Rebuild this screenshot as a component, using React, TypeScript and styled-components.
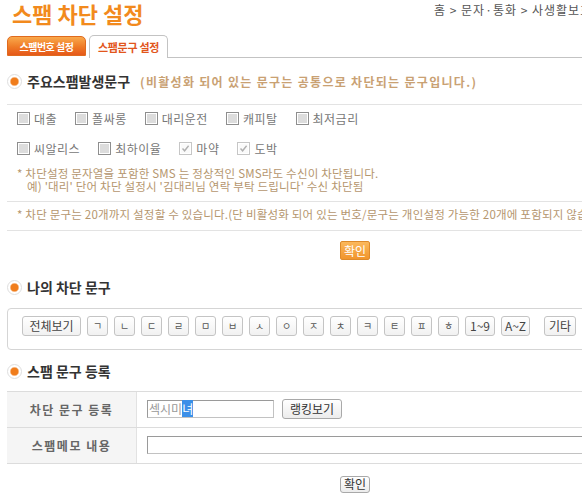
import React from 'react';
import styled, { createGlobalStyle } from 'styled-components';

const GlobalStyle = createGlobalStyle`
  html, body {
    margin: 0;
    padding: 0;
    background: #fff;
    overflow: hidden;
  }
  body {
    font-family: "Noto Sans CJK KR", "Noto Sans", sans-serif;
    font-size: 12px;
    color: #555;
  }
`;

const FONT = `"Noto Sans CJK KR", "Noto Sans", sans-serif`;

const Page = styled.div`
  width: 696px;
  margin-left: 7px;
`;

const Header = styled.header`
  display: grid;
  grid-template-columns: 422px auto;
  height: 30px;
  padding-left: 5px;
`;

const Title = styled.h1`
  margin: 0;
  font-size: 22px;
  line-height: 27px;
  font-weight: 700;
  color: #f28a1d;
`;

const Breadcrumb = styled.div`
  font-size: 12px;
  line-height: 20px;
  color: #555;
  letter-spacing: 1px;
  white-space: nowrap;
`;

const TabBar = styled.div`
  display: flex;
  align-items: flex-end;
  height: 23px;
  margin-top: 5px;
`;

const Tab = styled.div<{ $active?: boolean }>`
  box-sizing: border-box;
  width: 79px;
  display: flex;
  align-items: center;
  justify-content: center;
  border-radius: 5px 5px 0 0;
  font-weight: 700;
  white-space: nowrap;
  ${(p) =>
    p.$active
      ? `
    height: 23px;
    margin-left: 3px;
    background: #fff;
    border: 1px solid #c3c3c3;
    border-bottom: none;
    color: #e2561c;
    font-size: 11px;
    letter-spacing: -0.3px;
  `
      : `
    height: 20px;
    margin-bottom: 2px;
    background: linear-gradient(#f9a94c, #ef7a26 55%, #e5581a);
    border: 1px solid #e06a1e;
    color: #fff;
    font-size: 10px;
    letter-spacing: -0.5px;
  `}
`;

const TabFiller = styled.div`
  flex: 1;
  border-bottom: 1px solid #c3c3c3;
`;

const SectionHead = styled.div<{ $top: number }>`
  display: flex;
  align-items: center;
  gap: 5px;
  height: 17px;
  margin-top: ${(p) => p.$top}px;
`;

const Bullet = styled.span`
  width: 15px;
  height: 15px;
  border-radius: 50%;
  box-sizing: border-box;
  border: 1px solid #dedede;
  background: radial-gradient(circle, #f07d1c 0 3.5px, #f7b37a 4px, #fff 5px);
  flex-shrink: 0;
`;

const HeadText = styled.h2`
  margin: 0;
  font-size: 14px;
  font-weight: 700;
  color: #333;
  line-height: 17px;
  white-space: nowrap;
`;

const HeadNote = styled.span`
  margin-left: 5px;
  font-size: 12px;
  font-weight: 700;
  color: #c9a173;
  letter-spacing: 1.3px;
  white-space: nowrap;
`;

const HeadBlock = styled.div`
  padding-bottom: 14px;
  border-bottom: 1px solid #e3e3e3;
`;

const CheckList = styled.div`
  display: flex;
  flex-direction: column;
  gap: 14px;
  padding: 5px 0 0 10px;
`;

const CheckRow = styled.div`
  display: flex;
  align-items: center;
  height: 16px;
`;

const CheckItem = styled.label`
  display: inline-flex;
  align-items: center;
  gap: 4px;
  margin-right: 18px;
  color: #777;
  font-size: 12px;
  letter-spacing: 0.5px;
  white-space: nowrap;
`;

const Box = styled.span<{ $checked?: boolean }>`
  box-sizing: border-box;
  width: 13px;
  height: 13px;
  display: inline-flex;
  align-items: center;
  justify-content: center;
  border: 1px solid ${(p) => (p.$checked ? '#c6c6c6' : '#8e8e8e')};
  background: ${(p) => (p.$checked ? '#fafafa' : '#dcdcdc')};
  box-shadow: inset 0 0 0 1px #fff;
`;

const Notes = styled.div<{ $top: number; $pad: number }>`
  margin-top: ${(p) => p.$top}px;
  padding: 0 0 ${(p) => p.$pad}px 10px;
  border-bottom: 1px solid #e3e3e3;
  color: #b5966e;
  font-size: 11.5px;
  line-height: 12.5px;
  white-space: nowrap;
  overflow: hidden;
`;

const NoteLine = styled.div<{ $indent?: boolean }>`
  padding-left: ${(p) => (p.$indent ? 10 : 0)}px;
  letter-spacing: 0.2px;
`;

const Center = styled.div<{ $top: number }>`
  display: flex;
  justify-content: center;
  margin-top: ${(p) => p.$top}px;
`;

const OrangeButton = styled.button`
  width: 30px;
  height: 19px;
  padding: 0;
  border: 1px solid #dd8a2a;
  border-radius: 2px;
  background: linear-gradient(#fbb85c, #f1952c);
  color: #fff;
  font-family: ${FONT};
  font-size: 12px;
  line-height: 17px;
`;

const GreyButton = styled.button<{ $w: number; $h: number }>`
  width: ${(p) => p.$w}px;
  height: ${(p) => p.$h}px;
  padding: 0;
  flex-shrink: 0;
  border: 1px solid #a9a9a9;
  border-radius: 3px;
  background: linear-gradient(#fff, #ececec);
  color: #333;
  font-family: ${FONT};
  font-size: 12px;
  line-height: 1;
`;

const KeyBox = styled.div`
  display: flex;
  gap: 6px;
  height: 20px;
  margin-top: 12px;
  padding: 7px 14px 13px;
  border: 1px solid #d5d5d5;
  border-radius: 4px;
`;

const KeyButton = styled.button<{ $w: number; $small?: boolean }>`
  width: ${(p) => p.$w}px;
  height: 20px;
  padding: 0;
  flex-shrink: 0;
  border: 1px solid #c4c4c4;
  border-radius: 3px;
  background: linear-gradient(#fff, #f1f1f1);
  color: ${(p) => (p.$small ? '#555' : '#444')};
  font-family: ${FONT};
  font-size: ${(p) => (p.$small ? 10 : 12)}px;
  line-height: 1;
`;

const Table = styled.div`
  margin-top: 11px;
  border-top: 1px solid #dcdcdc;
`;

const Row = styled.div`
  display: grid;
  grid-template-columns: 130px 1fr;
  height: 35px;
  border-bottom: 1px solid #dcdcdc;
`;

const Label = styled.div`
  display: flex;
  align-items: center;
  justify-content: center;
  background: #f5f5f5;
  border-right: 1px solid #e2e2e2;
  color: #666;
  font-weight: 700;
  font-size: 12px;
  letter-spacing: 1.5px;
`;

const Cell = styled.div`
  display: flex;
  align-items: center;
  gap: 8px;
  padding-left: 10px;
`;

const Field = styled.div<{ $wide?: boolean }>`
  box-sizing: border-box;
  height: 18px;
  ${(p) => (p.$wide ? 'flex: 1; margin-right: 10px;' : 'width: 127px;')}
  border: 1px solid #c2c2c2;
  border-top-color: #9a9a9a;
  border-left-color: #9a9a9a;
  padding-left: 1px;
  color: #999;
  font-size: 12px;
  line-height: 16px;
  white-space: nowrap;
`;

const Selected = styled.span`
  background: #3b8fe8;
  color: #fff;
`;

const Check = () => (
  <svg width="9" height="9" viewBox="0 0 9 9">
    <path d="M1.5 4.5 L3.6 6.8 L7.6 1.8" fill="none" stroke="#b0b0b0" strokeWidth="1.4" />
  </svg>
);

const row1 = ['대출', '폴싸롱', '대리운전', '캐피탈', '최저금리'];
const row2: [string, boolean][] = [
  ['씨알리스', false],
  ['최하이율', false],
  ['마약', true],
  ['도박', true],
];
const jamo = ['ㄱ', 'ㄴ', 'ㄷ', 'ㄹ', 'ㅁ', 'ㅂ', 'ㅅ', 'ㅇ', 'ㅈ', 'ㅊ', 'ㅋ', 'ㅌ', 'ㅍ', 'ㅎ'];

export default function App() {
  return (
    <Page>
      <GlobalStyle />
      <Header>
        <Title>스팸 차단 설정</Title>
        <Breadcrumb>홈 &gt; 문자·통화 &gt; 사생활보호</Breadcrumb>
      </Header>

      <TabBar>
        <Tab>스팸번호 설정</Tab>
        <Tab $active>스팸문구 설정</Tab>
        <TabFiller />
      </TabBar>

      <HeadBlock>
        <SectionHead $top={15}>
          <Bullet />
          <HeadText>주요스팸발생문구</HeadText>
          <HeadNote>(비활성화 되어 있는 문구는 공통으로 차단되는 문구입니다.)</HeadNote>
        </SectionHead>
      </HeadBlock>

      <CheckList>
        <CheckRow>
          {row1.map((t) => (
            <CheckItem key={t}>
              <Box />
              {t}
            </CheckItem>
          ))}
        </CheckRow>
        <CheckRow>
          {row2.map(([t, c]) => (
            <CheckItem key={t}>
              <Box $checked={c}>{c && <Check />}</Box>
              {t}
            </CheckItem>
          ))}
        </CheckRow>
      </CheckList>

      <Notes $top={11} $pad={9}>
        <NoteLine>* 차단설정 문자열을 포함한 SMS 는 정상적인 SMS라도 수신이 차단됩니다.</NoteLine>
        <NoteLine $indent>예) '대리' 단어 차단 설정시 '김대리님 연락 부탁 드립니다' 수신 차단됨</NoteLine>
      </Notes>
      <Notes $top={6} $pad={9}>
        <NoteLine>
          * 차단 문구는 20개까지 설정할 수 있습니다.(단 비활성화 되어 있는 번호/문구는 개인설정 가능한 20개에 포함되지 않습니다.)
        </NoteLine>
      </Notes>

      <Center $top={10}>
        <OrangeButton>확인</OrangeButton>
      </Center>

      <SectionHead $top={19}>
        <Bullet />
        <HeadText>나의 차단 문구</HeadText>
      </SectionHead>

      <KeyBox>
        <KeyButton $w={59}>전체보기</KeyButton>
        {jamo.map((j) => (
          <KeyButton key={j} $w={21} $small>
            {j}
          </KeyButton>
        ))}
        <KeyButton $w={30}>1~9</KeyButton>
        <KeyButton $w={29}>A~Z</KeyButton>
        <KeyButton $w={32} style={{ marginLeft: 8 }}>기타</KeyButton>
      </KeyBox>

      <SectionHead $top={13}>
        <Bullet />
        <HeadText>스팸 문구 등록</HeadText>
      </SectionHead>

      <Table>
        <Row>
          <Label>차단 문구 등록</Label>
          <Cell>
            <Field>
              섹시미<Selected>녀</Selected>
            </Field>
            <GreyButton $w={60} $h={20}>랭킹보기</GreyButton>
          </Cell>
        </Row>
        <Row>
          <Label>스팸메모 내용</Label>
          <Cell>
            <Field $wide />
          </Cell>
        </Row>
      </Table>

      <Center $top={12}>
        <GreyButton $w={30} $h={17}>확인</GreyButton>
      </Center>
    </Page>
  );
}
